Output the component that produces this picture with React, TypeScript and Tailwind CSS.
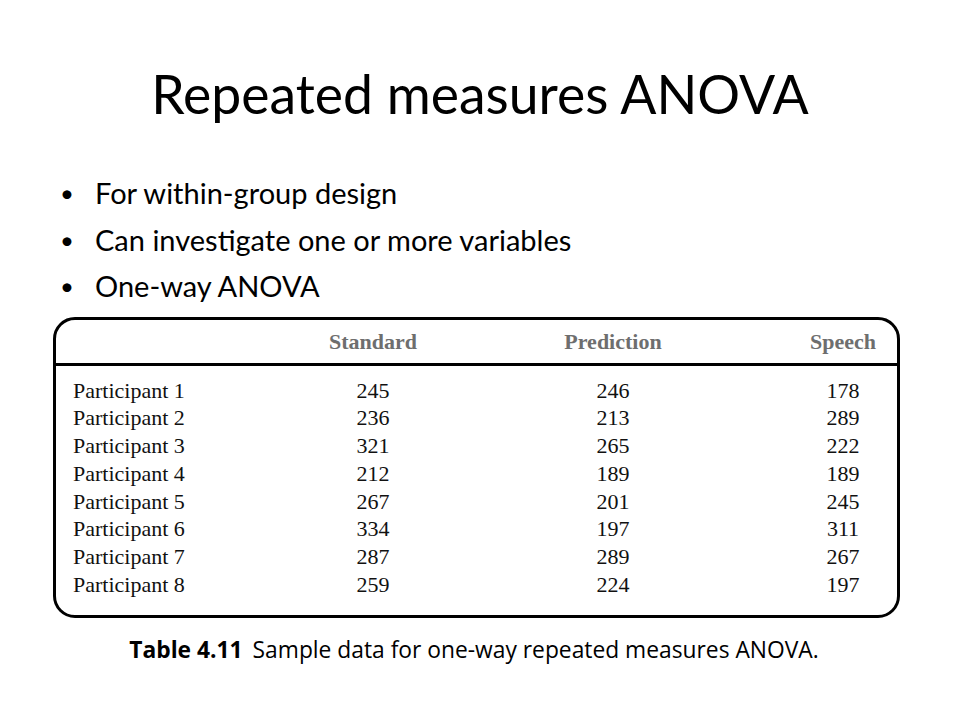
const rows: [string, number, number, number][] = [
  ['Participant 1', 245, 246, 178],
  ['Participant 2', 236, 213, 289],
  ['Participant 3', 321, 265, 222],
  ['Participant 4', 212, 189, 189],
  ['Participant 5', 267, 201, 245],
  ['Participant 6', 334, 197, 311],
  ['Participant 7', 287, 289, 267],
  ['Participant 8', 259, 224, 197],
]

const bullets = ['For within-group design', 'Can investigate one or more variables', 'One-way ANOVA']

export default function App() {
  return (
    <div className="w-[960px] h-[720px] bg-white text-black overflow-hidden">
      {/* Slide title */}
      <h1 className="pt-[60px] text-center text-[53.5px] leading-[66px] font-['Lato',sans-serif]">
        Repeated measures ANOVA
      </h1>

      {/* Bullets */}
      <ul className="mt-[44px] pl-[60px] font-['Lato',sans-serif] text-[29px]">
        {bullets.map((b) => (
          <li key={b} className="flex leading-[46.5px]">
            <span className="w-[35px] text-[24px]">•</span>
            {b}
          </li>
        ))}
      </ul>

      {/* Table */}
      <div className="mt-[7px] ml-[53px] w-[847px] border-[3px] border-black rounded-[22px] font-['Liberation_Serif',serif] text-[22px]">
        <div className="flex items-center h-[46px] border-b-[3px] border-black font-bold text-[#6e6e6e] pl-[17px]">
          <span className="w-[240px]" />
          <span className="w-[120px] text-center">Standard</span>
          <span className="ml-[120px] w-[120px] text-center">Prediction</span>
          <span className="ml-[120px] w-[100px] text-center">Speech</span>
        </div>
        <div className="pt-[11px] pb-[16px] pl-[17px] text-[#111]">
          {rows.map(([name, a, b, c]) => (
            <div key={name} className="flex leading-[27.8px]">
              <span className="w-[240px]">{name}</span>
              <span className="w-[120px] text-center">{a}</span>
              <span className="ml-[120px] w-[120px] text-center">{b}</span>
              <span className="ml-[120px] w-[100px] text-center">{c}</span>
            </div>
          ))}
        </div>
      </div>

      {/* Caption */}
      <p className="mt-[17px] pr-[12px] text-center leading-[30px] text-[22.8px] font-['Open_Sans',sans-serif]">
        <span className="font-bold">Table 4.11</span>
        <span className="ml-[10px]">Sample data for one-way repeated measures ANOVA.</span>
      </p>
    </div>
  )
}
